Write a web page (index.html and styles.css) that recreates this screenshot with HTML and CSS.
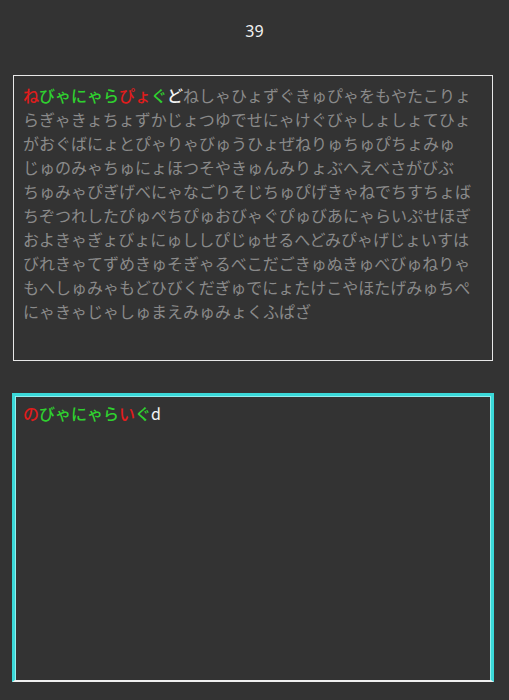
FILE: index.html
```html
<!DOCTYPE html>
<html lang="ja">
<head>
<meta charset="utf-8">
<link rel="stylesheet" href="styles.css">
</head>
<body>
<div class="page">
  <div class="counter">39</div>
  <div class="prompt"><span class="bad">ね</span><span class="ok">びゃにゃら</span><span class="bad">ぴょ</span><span class="ok">ぐ</span><span class="cur">ど</span><span class="rest">ねしゃひょずぐきゅぴゃをもやたこりょらぎゃきょちょずかじょつゆでせにゃけぐびゃしょしょてひょがおぐばにょとぴゃりゃびゅうひょぜねりゅちゅぴちょみゅじゅのみゃちゅにょほつそやきゅんみりょぶへえべさがびぶちゅみゃぴぎげべにゃなごりそじちゅぴげきゃねでちすちょばちぞつれしたぴゅぺちぴゅおびゃぐぴゅびあにゃらいぷせほぎおよきゃぎょびょにゅししぴじゅせるへどみぴゃげじょいすはびれきゃてずめきゅそぎゃるべこだごきゅぬきゅべびゅねりゃもへしゅみゃもどひびくだぎゅでにょたけこやほたげみゅちぺにゃきゃじゃしゅまえみゅみょくふぱざ</span></div>
  <div class="input"><span class="bad">の</span><span class="ok">びゃにゃら</span><span class="bad">い</span><span class="ok">ぐ</span><span class="typed">d</span></div>
</div>
</body>
</html>
```
FILE: styles.css
```css
html, body {
  margin: 0;
  padding: 0;
  background: #333333;
}
body {
  font-family: "Noto Sans CJK JP", "Noto Sans", sans-serif;
  font-size: 16px;
  line-height: 24px;
  color: #8a8a8a;
}
.page {
  display: flex;
  flex-direction: column;
}
.counter {
  height: 62px;
  display: flex;
  align-items: center;
  justify-content: center;
  color: #f2f2f2;
  font-family: "Noto Sans", sans-serif;
  font-size: 16px;
}
.prompt {
  box-sizing: border-box;
  margin: 13px 0 0 13px;
  width: 480px;
  height: 286px;
  border: 1px solid #e8e8e8;
  padding: 7px 9px;
  line-break: strict;
  word-break: normal;
}
.input {
  box-sizing: border-box;
  margin: 32px 0 0 12px;
  width: 482px;
  height: 289px;
  border-top: 3px solid #3ad9d9;
  border-left: 3px solid #3ad9d9;
  border-right: 3px solid #3ad9d9;
  border-bottom: 2px solid #f0f0f0;
  box-shadow: inset 1px 1px 0 #8ff0f0, inset -1px 0 0 #8ff0f0;
  padding: 5px 8px;
}
.bad { color: #e01c1c; font-weight: 500; }
.ok { color: #2fd02f; font-weight: 500; }
.cur { color: #f4f4f4; font-weight: 500; }
.typed { color: #f4f4f4; }
.rest { color: #8a8a8a; }
```
